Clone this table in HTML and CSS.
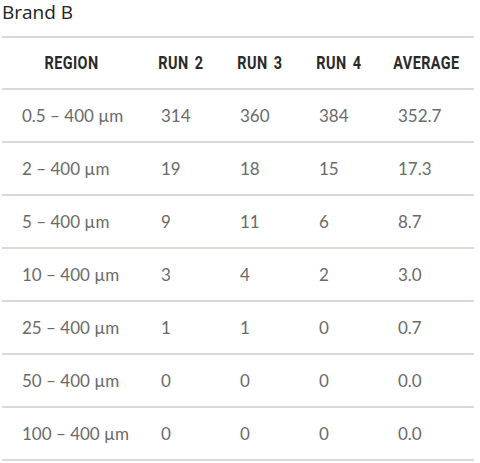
FILE: index.html
```html
<!DOCTYPE html>
<html>
<head>
<meta charset="utf-8">
<link rel="stylesheet" href="styles.css">
</head>
<body>
<h2 class="title">Brand B</h2>
<table class="data">
  <colgroup>
    <col class="c-region"><col class="c-run"><col class="c-run"><col class="c-run"><col class="c-avg">
  </colgroup>
  <thead>
    <tr><th><span class="h">REGION</span></th><th><span class="h">RUN 2</span></th><th><span class="h">RUN 3</span></th><th><span class="h">RUN 4</span></th><th><span class="h">AVERAGE</span></th></tr>
  </thead>
  <tbody>
    <tr><td>0.5 – 400 µm</td><td>314</td><td>360</td><td>384</td><td>352.7</td></tr>
    <tr><td>2 – 400 µm</td><td>19</td><td>18</td><td>15</td><td>17.3</td></tr>
    <tr><td>5 – 400 µm</td><td>9</td><td>11</td><td>6</td><td>8.7</td></tr>
    <tr><td>10 – 400 µm</td><td>3</td><td>4</td><td>2</td><td>3.0</td></tr>
    <tr><td>25 – 400 µm</td><td>1</td><td>1</td><td>0</td><td>0.7</td></tr>
    <tr><td>50 – 400 µm</td><td>0</td><td>0</td><td>0</td><td>0.0</td></tr>
    <tr><td>100 – 400 µm</td><td>0</td><td>0</td><td>0</td><td>0.0</td></tr>
  </tbody>
</table>
</body>
</html>
```
FILE: styles.css
```css
html, body { margin: 0; padding: 0; background: #fff; }
body { padding: 0 6px 0 2px; font-family: Lato, "Open Sans", sans-serif; }
.title {
  margin: 0;
  height: 36px;
  font-family: "Open Sans", sans-serif;
  font-weight: 400;
  font-size: 19px;
  line-height: 24px;
  color: #222;
}
.data {
  width: 472px;
  border-collapse: collapse;
  border-top: 2px solid #dcd9d4;
  table-layout: fixed;
}
.c-region { width: 139px; }
.c-run { width: 79px; }
.c-avg { width: 96px; }
.data th, .data td {
  border-bottom: 2px solid #dcd9d4;
  padding: 0 0 0 20px;
  white-space: nowrap;
}
.data th {
  height: 50px;
  padding: 0;
  text-align: center;
  font-family: Roboto, sans-serif;
  font-weight: 700;
  font-size: 18.5px;
  letter-spacing: 0.5px;
  word-spacing: 3px;
  color: #2a2a2a;
}
.h {
  display: inline-block;
  transform: scaleX(0.78);
}
.data td {
  height: 51px;
  text-align: left;
  font-size: 17px;
  color: #6a6a6a;
}
```
